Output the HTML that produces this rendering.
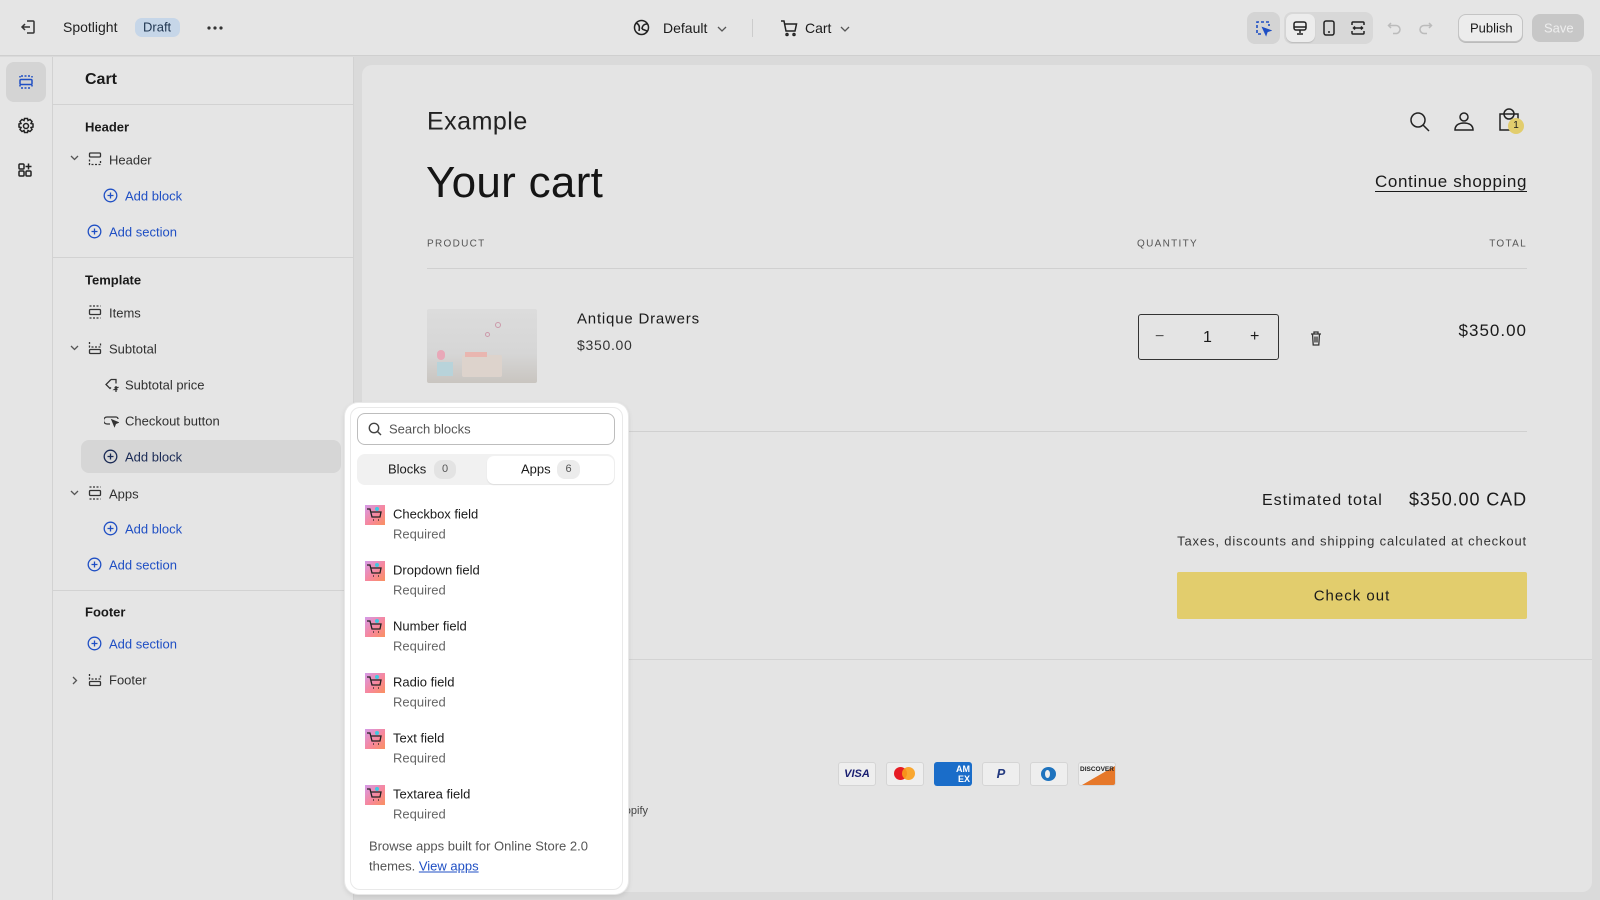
<!DOCTYPE html>
<html><head><meta charset="utf-8"><style>
*{box-sizing:border-box;margin:0;padding:0}
body{width:1600px;height:900px;overflow:hidden;background:#dadada;font-family:"Liberation Sans",sans-serif;color:#1a1a1a;position:relative}
.a{position:absolute}
.t{position:absolute;white-space:nowrap;transform:translateY(-50%)}
.blue{color:#1f4fc4}
svg{display:block}
</style></head><body>
<!-- top bar -->
<div class="a" style="left:0;top:0;width:1600px;height:56px;background:#e5e5e5;border-bottom:1px solid #cfcfcf"></div>
<svg class="a" style="left:19px;top:18px" width="18" height="18" viewBox="0 0 18 18" fill="none" stroke="#333" stroke-width="1.5"><path d="M8 3h6a1 1 0 0 1 1 1v10a1 1 0 0 1-1 1H8M3 9h8M6 6L3 9l3 3"/></svg>
<div class="t" style="left:63px;top:27px;font-size:14px;color:#222">Spotlight</div>
<div class="a" style="left:135px;top:18px;width:45px;height:19px;border-radius:7px;background:#c6d6e8"></div>
<div class="t" style="left:143px;top:27px;font-size:13px;color:#1f3550">Draft</div>
<svg class="a" style="left:207px;top:26px" width="16" height="4" viewBox="0 0 16 4" fill="#333"><circle cx="2" cy="2" r="1.6"/><circle cx="8" cy="2" r="1.6"/><circle cx="14" cy="2" r="1.6"/></svg>
<svg class="a" style="left:633px;top:19px" width="17" height="17" viewBox="0 0 17 17" fill="none" stroke="#222" stroke-width="1.5"><circle cx="8.5" cy="8.5" r="7"/><path d="M3 4c3 1 4 4 3 8M14 5c-3 0-5 2-5 5M9 10l5 2"/></svg>
<div class="t" style="left:663px;top:28px;font-size:14px">Default</div>
<svg class="a" style="left:717px;top:26px" width="10" height="6" viewBox="0 0 10 6" fill="none" stroke="#555" stroke-width="1.3"><path d="M1 1l4 4 4-4"/></svg>
<div class="a" style="left:752px;top:19px;width:1px;height:18px;background:#ccc"></div>
<svg class="a" style="left:780px;top:19px" width="18" height="18" viewBox="0 0 18 18" fill="none" stroke="#222" stroke-width="1.5"><path d="M1 2h3l2 10h9l1.5-7H5"/><circle cx="7" cy="15.5" r="1"/><circle cx="14" cy="15.5" r="1"/></svg>
<div class="t" style="left:805px;top:28px;font-size:14px">Cart</div>
<svg class="a" style="left:840px;top:26px" width="10" height="6" viewBox="0 0 10 6" fill="none" stroke="#555" stroke-width="1.3"><path d="M1 1l4 4 4-4"/></svg>
<div class="a" style="left:1247px;top:12px;width:33px;height:32px;border-radius:8px;background:#d4d4d4"></div>
<svg class="a" style="left:1255px;top:20px" width="17" height="17" viewBox="0 0 17 17" fill="none" stroke="#1f4fc4" stroke-width="1.6" stroke-dasharray="3 2"><path d="M6 14H2V2h12v4"/><path d="M8 8l7 2.5-3 1-1 3z" fill="#1f4fc4" stroke-dasharray="0"/></svg>
<div class="a" style="left:1284px;top:12px;width:89px;height:32px;border-radius:8px;background:#d8d8d8"></div>
<div class="a" style="left:1286px;top:14px;width:29px;height:28px;border-radius:7px;background:#ececec;box-shadow:0 1px 1px #bbb"></div>
<svg class="a" style="left:1292px;top:20px" width="16" height="16" viewBox="0 0 16 16" fill="none" stroke="#222" stroke-width="1.5"><rect x="2" y="2" width="12" height="8" rx="2"/><path d="M2 7h12M8 10v3M5 14h6"/></svg>
<svg class="a" style="left:1321px;top:19px" width="16" height="18" viewBox="0 0 16 18" fill="none" stroke="#222" stroke-width="1.5"><rect x="3" y="2" width="10" height="14" rx="2"/><path d="M7 13h2"/></svg>
<svg class="a" style="left:1350px;top:20px" width="16" height="16" viewBox="0 0 16 16" fill="none" stroke="#222" stroke-width="1.5"><path d="M2 5V3a1 1 0 0 1 1-1h10a1 1 0 0 1 1 1v2M2 11v2a1 1 0 0 0 1 1h10a1 1 0 0 0 1-1v-2M4 8h8M5 6.5L3.5 8 5 9.5M11 6.5L12.5 8 11 9.5"/></svg>
<svg class="a" style="left:1387px;top:21px" width="15" height="14" viewBox="0 0 15 14" fill="none" stroke="#bbb" stroke-width="1.5"><path d="M4 2L1.5 4.5 4 7M2 4.5h7a4 4 0 0 1 0 8H6"/></svg>
<svg class="a" style="left:1418px;top:21px" width="15" height="14" viewBox="0 0 15 14" fill="none" stroke="#bbb" stroke-width="1.5"><path d="M11 2l2.5 2.5L11 7M13 4.5H6a4 4 0 0 0 0 8h3"/></svg>
<div class="a" style="left:1458px;top:14px;width:65px;height:28px;border-radius:8px;background:#ececec;border:1px solid #c4c4c4;box-shadow:0 1px 0 #bbb"></div>
<div class="t" style="left:1470px;top:28px;font-size:13px">Publish</div>
<div class="a" style="left:1532px;top:14px;width:52px;height:28px;border-radius:8px;background:#c7c7c7"></div>
<div class="t" style="left:1544px;top:28px;font-size:13px;color:#eee">Save</div>

<!-- icon rail -->
<div class="a" style="left:0;top:57px;width:53px;height:843px;background:#e5e5e5;border-right:1px solid #d2d2d2"></div>
<div class="a" style="left:6px;top:62px;width:40px;height:40px;border-radius:8px;background:#d4d4d4"></div>
<svg class="a" style="left:18px;top:74px" width="16" height="16" viewBox="0 0 16 16" fill="none" stroke="#1f4fc4" stroke-width="1.5"><path d="M3 2h10M3 14h10" stroke-dasharray="2 1.5"/><rect x="2" y="5.5" width="12" height="5" rx="1"/><path d="M2 2v3M14 2v3M2 11v3M14 11v3" stroke-dasharray="1.5 1.5"/></svg>
<svg class="a" style="left:17px;top:117px" width="18" height="18" viewBox="0 0 18 18" fill="none" stroke="#222" stroke-width="1.5"><circle cx="9" cy="9" r="2.5"/><path d="M7.5 1.5h3l.5 2 2-1 2 2-1 2 2 .5v3l-2 .5 1 2-2 2-2-1-.5 2h-3l-.5-2-2 1-2-2 1-2-2-.5v-3l2-.5-1-2 2-2 2 1z"/></svg>
<svg class="a" style="left:17px;top:162px" width="16" height="16" viewBox="0 0 16 16" fill="none" stroke="#222" stroke-width="1.5"><rect x="2" y="2" width="5" height="5" rx="1"/><rect x="2" y="9" width="5" height="5" rx="1"/><rect x="9" y="9" width="5" height="5" rx="1"/><path d="M11.5 1.5v6M8.5 4.5h6"/></svg>

<!-- sidebar -->
<div class="a" style="left:53px;top:57px;width:301px;height:843px;background:#e5e5e5;border-right:1px solid #d2d2d2"></div>
<div class="t" style="left:85px;top:80px;font-size:16px;font-weight:bold">Cart</div>
<div class="a" style="left:53px;top:104px;width:301px;height:1px;background:#d2d2d2"></div>
<div class="a" style="left:53px;top:257px;width:301px;height:1px;background:#d2d2d2"></div>
<div class="a" style="left:53px;top:590px;width:301px;height:1px;background:#d2d2d2"></div>
<div class="a" style="left:81px;top:440px;width:260px;height:33px;border-radius:8px;background:#d6d6d6"></div>

<div class="t" style="left:85px;top:127px;font-size:13px;font-weight:bold">Header</div>
<div class="t" style="left:85px;top:280px;font-size:13px;font-weight:bold">Template</div>
<div class="t" style="left:85px;top:612px;font-size:13px;font-weight:bold">Footer</div>

<svg class="a" style="left:70px;top:155px" width="9" height="6" viewBox="0 0 9 6" fill="none" stroke="#555" stroke-width="1.3"><path d="M1 1l3.5 3.5L8 1"/></svg>
<svg class="a" style="left:70px;top:345px" width="9" height="6" viewBox="0 0 9 6" fill="none" stroke="#555" stroke-width="1.3"><path d="M1 1l3.5 3.5L8 1"/></svg>
<svg class="a" style="left:70px;top:490px" width="9" height="6" viewBox="0 0 9 6" fill="none" stroke="#555" stroke-width="1.3"><path d="M1 1l3.5 3.5L8 1"/></svg>
<svg class="a" style="left:72px;top:676px" width="6" height="9" viewBox="0 0 6 9" fill="none" stroke="#555" stroke-width="1.3"><path d="M1 1l3.5 3.5L1 8"/></svg>

<svg class="a" style="left:88px;top:152px" width="14" height="14" viewBox="0 0 14 14" fill="none" stroke="#333" stroke-width="1.3"><rect x="1.5" y="1" width="11" height="4" rx="1"/><path d="M1.5 7.5v5h11v-5" stroke-dasharray="2 1.5"/></svg>
<svg class="a" style="left:88px;top:305px" width="14" height="14" viewBox="0 0 14 14" fill="none" stroke="#333" stroke-width="1.3"><rect x="1.5" y="4.5" width="11" height="5" rx="1"/><path d="M1.5 1h11M1.5 13h11" stroke-dasharray="2 1.5"/></svg>
<svg class="a" style="left:88px;top:341px" width="14" height="14" viewBox="0 0 14 14" fill="none" stroke="#333" stroke-width="1.3"><path d="M1.5 1v5h11V1" stroke-dasharray="2 1.5"/><rect x="1.5" y="8.5" width="11" height="4" rx="1"/></svg>
<svg class="a" style="left:88px;top:486px" width="14" height="14" viewBox="0 0 14 14" fill="none" stroke="#333" stroke-width="1.3"><rect x="1.5" y="4.5" width="11" height="5" rx="1"/><path d="M1.5 1h11M1.5 13h11" stroke-dasharray="2 1.5"/></svg>
<svg class="a" style="left:88px;top:673px" width="14" height="14" viewBox="0 0 14 14" fill="none" stroke="#333" stroke-width="1.3"><path d="M1.5 1v5h11V1" stroke-dasharray="2 1.5"/><rect x="1.5" y="8.5" width="11" height="4" rx="1"/></svg>
<svg class="a" style="left:104px;top:378px" width="15" height="15" viewBox="0 0 15 15" fill="none" stroke="#333" stroke-width="1.3"><path d="M7 1.5L2 6.5l4 4 1-1M7 1.5h5v4"/><path d="M12 8v6M10.5 9.5h3l-3 2h3"/></svg>
<svg class="a" style="left:104px;top:413px" width="15" height="15" viewBox="0 0 15 15" fill="none" stroke="#333" stroke-width="1.3"><path d="M6 11H3a2 2 0 0 1 0-7h9a2 2 0 0 1 2 2"/><path d="M8 7l6 2.5-2.5 1-1 2.5z" fill="#333"/></svg>

<div class="t" style="left:109px;top:160px;font-size:13px;color:#303030">Header</div>
<div class="t" style="left:109px;top:313px;font-size:13px;color:#303030">Items</div>
<div class="t" style="left:109px;top:349px;font-size:13px;color:#303030">Subtotal</div>
<div class="t" style="left:125px;top:385px;font-size:13px;color:#303030">Subtotal price</div>
<div class="t" style="left:125px;top:421px;font-size:13px;color:#303030">Checkout button</div>
<div class="t" style="left:109px;top:494px;font-size:13px;color:#303030">Apps</div>
<div class="t" style="left:109px;top:680px;font-size:13px;color:#303030">Footer</div>

<svg class="a" style="left:103px;top:188px" width="15" height="15" viewBox="0 0 15 15" fill="none" stroke="#1f4fc4" stroke-width="1.3"><circle cx="7.5" cy="7.5" r="6.3"/><path d="M7.5 4.5v6M4.5 7.5h6"/></svg>
<div class="t blue" style="left:125px;top:196px;font-size:13px">Add block</div>
<svg class="a" style="left:87px;top:224px" width="15" height="15" viewBox="0 0 15 15" fill="none" stroke="#1f4fc4" stroke-width="1.3"><circle cx="7.5" cy="7.5" r="6.3"/><path d="M7.5 4.5v6M4.5 7.5h6"/></svg>
<div class="t blue" style="left:109px;top:232px;font-size:13px">Add section</div>
<svg class="a" style="left:103px;top:449px" width="15" height="15" viewBox="0 0 15 15" fill="none" stroke="#1a2a55" stroke-width="1.3"><circle cx="7.5" cy="7.5" r="6.3"/><path d="M7.5 4.5v6M4.5 7.5h6"/></svg>
<div class="t" style="left:125px;top:457px;font-size:13px;color:#1a2a55">Add block</div>
<svg class="a" style="left:103px;top:521px" width="15" height="15" viewBox="0 0 15 15" fill="none" stroke="#1f4fc4" stroke-width="1.3"><circle cx="7.5" cy="7.5" r="6.3"/><path d="M7.5 4.5v6M4.5 7.5h6"/></svg>
<div class="t blue" style="left:125px;top:529px;font-size:13px">Add block</div>
<svg class="a" style="left:87px;top:557px" width="15" height="15" viewBox="0 0 15 15" fill="none" stroke="#1f4fc4" stroke-width="1.3"><circle cx="7.5" cy="7.5" r="6.3"/><path d="M7.5 4.5v6M4.5 7.5h6"/></svg>
<div class="t blue" style="left:109px;top:565px;font-size:13px">Add section</div>
<svg class="a" style="left:87px;top:636px" width="15" height="15" viewBox="0 0 15 15" fill="none" stroke="#1f4fc4" stroke-width="1.3"><circle cx="7.5" cy="7.5" r="6.3"/><path d="M7.5 4.5v6M4.5 7.5h6"/></svg>
<div class="t blue" style="left:109px;top:644px;font-size:13px">Add section</div>

<!-- preview card -->
<div class="a" style="left:362px;top:65px;width:1230px;height:827px;background:#e4e4e4;border-radius:10px"></div>
<div class="t" style="left:427px;top:122px;font-size:25px;color:#222;letter-spacing:.5px">Example</div>
<svg class="a" style="left:1409px;top:111px" width="22" height="22" viewBox="0 0 22 22" fill="none" stroke="#222" stroke-width="1.5"><circle cx="9" cy="9" r="7"/><path d="M14 14l6 6"/></svg>
<svg class="a" style="left:1453px;top:110px" width="22" height="22" viewBox="0 0 22 22" fill="none" stroke="#222" stroke-width="1.5"><circle cx="11" cy="7" r="4"/><path d="M2 20c0-5 4-7 9-7s9 2 9 7z"/></svg>
<svg class="a" style="left:1498px;top:106px" width="22" height="26" viewBox="0 0 22 26" fill="none" stroke="#222" stroke-width="1.5"><path d="M2 8h18v16H2z"/><circle cx="11" cy="8" r="5"/></svg>
<div class="a" style="left:1508px;top:118px;width:16px;height:16px;border-radius:50%;background:#e2cd6d;font-size:10px;text-align:center;line-height:16px">1</div>
<div class="t" style="left:426px;top:183px;font-size:44px;color:#151515;letter-spacing:.3px">Your cart</div>
<div class="t" style="right:73px;top:182px;font-size:17px;letter-spacing:.6px;text-decoration:underline;text-underline-offset:4px">Continue shopping</div>
<div class="t" style="left:427px;top:244px;font-size:10px;letter-spacing:1.3px;color:#555">PRODUCT</div>
<div class="t" style="left:1137px;top:244px;font-size:10px;letter-spacing:1.3px;color:#555">QUANTITY</div>
<div class="t" style="right:73px;top:244px;font-size:10px;letter-spacing:1.3px;color:#555">TOTAL</div>
<div class="a" style="left:427px;top:268px;width:1100px;height:1px;background:#d0d0d0"></div>
<div class="a" style="left:427px;top:309px;width:110px;height:74px;border-radius:2px;background:linear-gradient(180deg,#dcdcdc 0%,#d6d6d6 60%,#c9c5c0 100%)"></div>
<div class="a" style="left:462px;top:355px;width:40px;height:22px;background:#ddd3cc;border-radius:2px"></div>
<div class="a" style="left:465px;top:352px;width:22px;height:5px;background:#e9b6b0"></div>
<div class="a" style="left:437px;top:350px;width:8px;height:10px;background:#e8a8b8;border-radius:4px"></div>
<div class="a" style="left:437px;top:362px;width:16px;height:14px;background:#b8d3da"></div>
<div class="a" style="left:495px;top:322px;width:6px;height:6px;border:1px solid #c9a;border-radius:50%"></div>
<div class="a" style="left:485px;top:332px;width:5px;height:5px;border:1px solid #c9a;border-radius:50%"></div>
<div class="t" style="left:577px;top:319px;font-size:15px;letter-spacing:.8px">Antique Drawers</div>
<div class="t" style="left:577px;top:345px;font-size:14px;letter-spacing:.7px;color:#333">$350.00</div>
<div class="a" style="left:1138px;top:314px;width:141px;height:46px;border:1px solid #333;border-radius:3px"></div>
<div class="t" style="left:1155px;top:337px;font-size:16px;color:#555">−</div>
<div class="t" style="left:1203px;top:338px;font-size:16px">1</div>
<div class="t" style="left:1250px;top:337px;font-size:16px">+</div>
<svg class="a" style="left:1310px;top:331px" width="12" height="15" viewBox="0 0 12 15" fill="none" stroke="#333" stroke-width="1.3"><path d="M1 3h10M4 3V1h4v2M2.5 3l.7 11h5.6l.7-11M5 5.5v6M7 5.5v6"/></svg>
<div class="t" style="right:73px;top:331px;font-size:17px;letter-spacing:1px">$350.00</div>
<div class="a" style="left:427px;top:431px;width:1100px;height:1px;background:#d0d0d0"></div>
<div class="t" style="left:1262px;top:501px;font-size:16px;letter-spacing:1px">Estimated total</div>
<div class="t" style="right:73px;top:500px;font-size:18px;letter-spacing:.9px">$350.00 CAD</div>
<div class="t" style="right:73px;top:541px;font-size:13px;letter-spacing:.85px;color:#333">Taxes, discounts and shipping calculated at checkout</div>
<div class="a" style="left:1177px;top:572px;width:350px;height:47px;background:#e2cd6d;border-radius:2px"></div>
<div class="t" style="left:1177px;width:350px;text-align:center;top:596px;font-size:15px;letter-spacing:1px">Check out</div>
<div class="a" style="left:362px;top:659px;width:1230px;height:1px;background:#d3d3d3"></div>
<!-- payment -->
<div class="a" style="left:838px;top:762px;width:38px;height:24px;background:#eee;border:1px solid #d5d5d5;border-radius:3px;font:bold italic 11px 'Liberation Sans',sans-serif;color:#1a1f71;text-align:center;line-height:22px">VISA</div>
<div class="a" style="left:886px;top:762px;width:38px;height:24px;background:#eee;border:1px solid #d5d5d5;border-radius:3px"></div>
<div class="a" style="left:894px;top:767px;width:13px;height:13px;border-radius:50%;background:#e61c24"></div>
<div class="a" style="left:902px;top:767px;width:13px;height:13px;border-radius:50%;background:#f99f1b;opacity:.9"></div>
<div class="a" style="left:934px;top:762px;width:38px;height:24px;background:#1a6dc9;border-radius:3px;font:bold 9px 'Liberation Sans',sans-serif;color:#fff;text-align:right;padding-right:2px;line-height:10px;padding-top:2px">AM<br>EX</div>
<div class="a" style="left:982px;top:762px;width:38px;height:24px;background:#eee;border:1px solid #d5d5d5;border-radius:3px;font:bold italic 13px 'Liberation Sans',sans-serif;color:#253b80;text-align:center;line-height:22px">P</div>
<div class="a" style="left:1030px;top:762px;width:38px;height:24px;background:#eee;border:1px solid #d5d5d5;border-radius:3px"></div>
<div class="a" style="left:1041px;top:767px;width:15px;height:14px;border-radius:50%;background:#1e73be"></div>
<div class="a" style="left:1045px;top:770px;width:5px;height:8px;background:#eee;border-radius:50%"></div>
<div class="a" style="left:1078px;top:762px;width:38px;height:24px;background:linear-gradient(150deg,#eee 55%,#e6782a 56%);border:1px solid #d5d5d5;border-radius:3px;font:bold 6.5px 'Liberation Sans',sans-serif;color:#222;text-align:center;line-height:14px">DISCOVER</div>
<div class="t" style="right:952px;top:811px;font-size:11px;color:#444">© 2024, Example Powered by Shopify</div>

<!-- popup -->
<div class="a" style="left:345px;top:403px;width:283px;height:491px;background:#fff;border-radius:13px;box-shadow:0 0 0 1px #e8e8e8,0 2px 6px rgba(0,0,0,.12)"></div>
<div class="a" style="left:350px;top:407px;width:273px;height:483px;border-radius:10px;border:1px solid #e9e9e9"></div>
<div class="a" style="left:357px;top:413px;width:258px;height:32px;border:1px solid #bdbdbd;border-radius:8px;background:#fff"></div>
<svg class="a" style="left:368px;top:422px" width="14" height="14" viewBox="0 0 14 14" fill="none" stroke="#444" stroke-width="1.4"><circle cx="6" cy="6" r="4.7"/><path d="M9.5 9.5L13 13"/></svg>
<div class="t" style="left:389px;top:429px;font-size:13px;color:#555">Search blocks</div>
<div class="a" style="left:357px;top:454px;width:258px;height:31px;border-radius:8px;background:#f1f1f1"></div>
<div class="a" style="left:487px;top:456px;width:127px;height:28px;border-radius:7px;background:#fff;box-shadow:0 1px 1px #ddd"></div>
<div class="t" style="left:388px;top:469px;font-size:13px">Blocks</div>
<div class="a" style="left:434px;top:460px;width:22px;height:19px;border-radius:8px;background:#e3e3e3;font-size:11px;color:#555;text-align:center;line-height:19px">0</div>
<div class="t" style="left:521px;top:469px;font-size:13px">Apps</div>
<div class="a" style="left:557px;top:460px;width:23px;height:19px;border-radius:8px;background:#ececec;font-size:11px;color:#555;text-align:center;line-height:19px">6</div>

<div class="a" style="left:365px;top:505px;width:20px;height:20px;background:linear-gradient(135deg,#d49ae8,#f7879c 55%,#f99060)"></div>
<div class="t" style="left:393px;top:514px;font-size:13px">Checkbox field</div>
<div class="t" style="left:393px;top:534px;font-size:13px;color:#666">Required</div>
<div class="a" style="left:365px;top:561px;width:20px;height:20px;background:linear-gradient(135deg,#d49ae8,#f7879c 55%,#f99060)"></div>
<div class="t" style="left:393px;top:570px;font-size:13px">Dropdown field</div>
<div class="t" style="left:393px;top:590px;font-size:13px;color:#666">Required</div>
<div class="a" style="left:365px;top:617px;width:20px;height:20px;background:linear-gradient(135deg,#d49ae8,#f7879c 55%,#f99060)"></div>
<div class="t" style="left:393px;top:626px;font-size:13px">Number field</div>
<div class="t" style="left:393px;top:646px;font-size:13px;color:#666">Required</div>
<div class="a" style="left:365px;top:673px;width:20px;height:20px;background:linear-gradient(135deg,#d49ae8,#f7879c 55%,#f99060)"></div>
<div class="t" style="left:393px;top:682px;font-size:13px">Radio field</div>
<div class="t" style="left:393px;top:702px;font-size:13px;color:#666">Required</div>
<div class="a" style="left:365px;top:729px;width:20px;height:20px;background:linear-gradient(135deg,#d49ae8,#f7879c 55%,#f99060)"></div>
<div class="t" style="left:393px;top:738px;font-size:13px">Text field</div>
<div class="t" style="left:393px;top:758px;font-size:13px;color:#666">Required</div>
<div class="a" style="left:365px;top:785px;width:20px;height:20px;background:linear-gradient(135deg,#d49ae8,#f7879c 55%,#f99060)"></div>
<div class="t" style="left:393px;top:794px;font-size:13px">Textarea field</div>
<div class="t" style="left:393px;top:814px;font-size:13px;color:#666">Required</div>
<svg class="a" style="left:0;top:0;overflow:visible" width="1" height="1">
<g fill="none" stroke="#222" stroke-width="1.3">
<path d="M367 509h3l2 8h8l1-5h-10M373 520h1M378 520h1"/>
<path d="M367 565h3l2 8h8l1-5h-10M373 576h1M378 576h1"/>
<path d="M367 621h3l2 8h8l1-5h-10M373 632h1M378 632h1"/>
<path d="M367 677h3l2 8h8l1-5h-10M373 688h1M378 688h1"/>
<path d="M367 733h3l2 8h8l1-5h-10M373 744h1M378 744h1"/>
<path d="M367 789h3l2 8h8l1-5h-10M373 800h1M378 800h1"/>
</g>
<g fill="#3fc8e0"><circle cx="377" cy="509" r="2"/><circle cx="377" cy="565" r="2"/><circle cx="377" cy="621" r="2"/><circle cx="377" cy="677" r="2"/><circle cx="377" cy="733" r="2"/><circle cx="377" cy="789" r="2"/></g>
</svg>
<div class="t" style="left:369px;top:846px;font-size:13px;color:#555">Browse apps built for Online Store 2.0</div>
<div class="t" style="left:369px;top:866px;font-size:13px;color:#555">themes. <span style="color:#1f4fc4;text-decoration:underline">View apps</span></div>
</body></html>
